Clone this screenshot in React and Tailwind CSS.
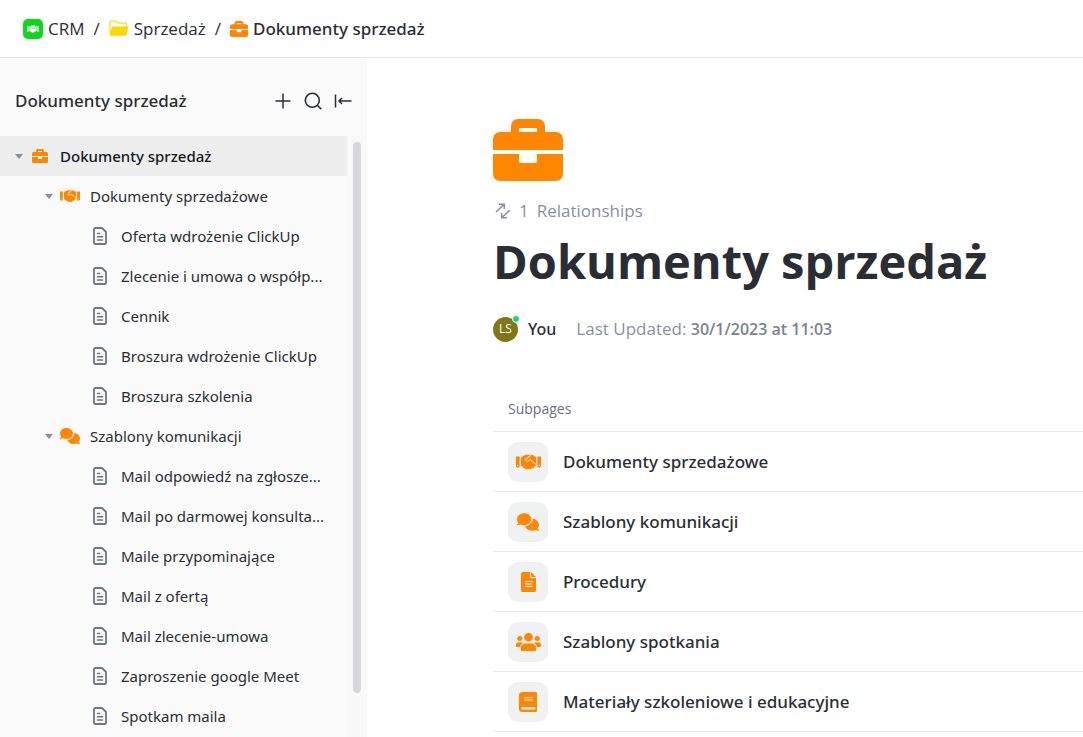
import React, { useState } from 'react';
import { FaComments } from 'react-icons/fa6';

const BriefcaseIcon = ({ className }) => (
  <svg viewBox="0 0 70 62" className={className} fill="currentColor">
    <path
      fillRule="evenodd"
      d="M18 13V7a7 7 0 0 1 7-7h20a7 7 0 0 1 7 7v6h11a7 7 0 0 1 7 7v11H0V20a7 7 0 0 1 7-7ZM26 9v4h18V9Z"
    />
    <path d="M0 35h26v7a2 2 0 0 0 2 2h14a2 2 0 0 0 2-2v-7h26v20a7 7 0 0 1-7 7H7a7 7 0 0 1-7-7Z" />
  </svg>
);

const HandshakeIcon = ({ className, line = '#fff' }) => (
  <svg viewBox="0 0 25 16" className={className} fill="currentColor">
    <path d="M0 2.500h3.600v11H1.200A1.200 1.200 0 0 1 0 12.300ZM25 2.500h-3.600v11h2.400a1.200 1.200 0 0 0 1.200-1.200Z" />
    <path d="M5 2.800 6.500 2.500 9.500.7H16l3 1.800 1.200.3V11.600l-1.500.6-1 1.600-1.700.1-1.300 1.600-1.900-.4-1.600.5-2.600-1.200-3-2.400H5Z" />
    <path d="M14.500 1.600 10 4.900c-1.300 1.200.5 3 2.200 2l2-1.400 5.300 4.600" fill="none" stroke={line} strokeWidth="1" />
    <path d="M1.200 11h1v1h-1ZM22.800 11h1v1h-1Z" fill={line} />
  </svg>
);

const FileIcon = ({ className }) => (
  <svg viewBox="0 0 15 20" className={className} fill="currentColor">
    <path d="M1.500 0H9v4.800A1.200 1.200 0 0 0 10.200 6H15v12.500a1.500 1.500 0 0 1-1.500 1.500h-12A1.500 1.500 0 0 1 0 18.500v-17A1.500 1.500 0 0 1 1.500 0ZM10 0l5 5h-5Z" />
    <path d="M4 9.500h7.500M4 12h7.500M4 14.500h7.500" stroke="#f0f1f3" strokeWidth="1" />
  </svg>
);

const PeopleIcon = ({ className }) => (
  <svg viewBox="0 0 25 18" className={className} fill="currentColor">
    <circle cx="12.500" cy="4.300" r="4.300" />
    <circle cx="3.800" cy="5.400" r="2.500" />
    <circle cx="21.200" cy="5.400" r="2.500" />
    <path d="M9.500 10.500h6a4.800 4.800 0 0 1 4.800 4.800V16.500a1.500 1.500 0 0 1-1.500 1.500H6.200a1.500 1.500 0 0 1-1.500-1.500V15.300a4.800 4.800 0 0 1 4.800-4.800Z" />
    <path d="M2.800 9.200h2.400L6.800 10.300C5.200 11.200 4.500 12.500 4.200 14H1A1 1 0 0 1 0 13v-1a2.800 2.800 0 0 1 2.800-2.800ZM22.200 9.200h-2.400L18.200 10.300c1.600.9 2.300 2.200 2.600 3.700H24a1 1 0 0 0 1-1v-1a2.800 2.800 0 0 0-2.800-2.800Z" />
  </svg>
);

const BookIcon = ({ className }) => (
  <svg viewBox="0 0 18 20" className={className} fill="currentColor">
    <path d="M3.500 0H17a1 1 0 0 1 1 1V19a1 1 0 0 1-1 1H3.500A3.500 3.500 0 0 1 0 16.500v-13A3.500 3.500 0 0 1 3.500 0Z" />
    <path d="M5 5.500h9M5 8h9" stroke="#f0f1f3" strokeWidth="1" />
    <path d="M3.600 16.300H15" stroke="#f0f1f3" strokeWidth="2.400" strokeLinecap="round" />
  </svg>
);

const DocIcon = () => (
  <svg viewBox="0 0 14 18" className="h-[18px] w-3.5 shrink-0" fill="none" stroke="#6f7680" strokeWidth="1.800" strokeLinecap="round">
    <path d="M2.600 1H9l4 4v10.400A1.600 1.600 0 0 1 11.400 17H2.600A1.600 1.600 0 0 1 1 15.400V2.600A1.600 1.600 0 0 1 2.600 1Z" strokeLinejoin="round" />
    <path d="M4.500 6.500h2M4.500 9.700h5M4.500 13h5" strokeWidth="1.600" />
  </svg>
);

const FolderIcon = () => (
  <svg viewBox="0 0 20 17" className="h-[17px] w-5">
    <path d="M1 13V2.500A1.500 1.500 0 0 1 2.500 1H6.500L8.500 3H16A1.500 1.500 0 0 1 17.500 4.500V7" fill="none" stroke="#fbe04f" strokeWidth="1.600" />
    <path d="M3.500 6.500H19.200L17.800 14.300A1.800 1.800 0 0 1 16 15.800H2A1.500 1.500 0 0 1 .5 14.300Z" fill="#fbd900" />
  </svg>
);

const RelationIcon = () => (
  <svg viewBox="0 0 16 16" className="h-4 w-4" fill="none" stroke="currentColor" strokeWidth="1.600">
    <path d="M1 9 9 1.500M4 1.300h5.300V6M15 7 7 14.500M12 14.700H6.700V10" />
  </svg>
);

const CaretIcon = () => (
  <svg viewBox="0 0 8 5" className="h-[5px] w-2" fill="currentColor">
    <path d="M0 0h8L4 5Z" />
  </svg>
);

const pages = [
  {
    title: 'Dokumenty sprzedażowe',
    icon: HandshakeIcon,
    children: [
      'Oferta wdrożenie ClickUp',
      'Zlecenie i umowa o współp...',
      'Cennik',
      'Broszura wdrożenie ClickUp',
      'Broszura szkolenia',
    ],
  },
  {
    title: 'Szablony komunikacji',
    icon: FaComments,
    children: [
      'Mail odpowiedź na zgłosze...',
      'Mail po darmowej konsulta...',
      'Maile przypominające',
      'Mail z ofertą',
      'Mail zlecenie-umowa',
      'Zaproszenie google Meet',
      'Spotkam maila',
    ],
  },
];

const subpages = [
  { title: 'Dokumenty sprzedażowe', icon: HandshakeIcon, size: 'h-4 w-[25px]' },
  { title: 'Szablony komunikacji', icon: FaComments, size: 'h-[22px] w-[22px]' },
  { title: 'Procedury', icon: FileIcon, size: 'h-5 w-[15px]' },
  { title: 'Szablony spotkania', icon: PeopleIcon, size: 'h-[18px] w-[25px]' },
  { title: 'Materiały szkoleniowe i edukacyjne', icon: BookIcon, size: 'h-5 w-[18px]' },
];

// Leaf row of the page tree
const PageRow = ({ title }) => (
  <li>
    <a href="#" className="flex h-10 items-center gap-3.5 whitespace-nowrap pl-[93px]">
      <DocIcon />
      {title}
    </a>
  </li>
);

const PageGroup = ({ page }) => {
  const [open, setOpen] = useState(true);
  const Icon = page.icon;

  return (
    <li>
      <div className="flex h-10 items-center pl-[45px]">
        <button aria-label={`Toggle ${page.title}`} onClick={() => setOpen(!open)} className="flex w-[15px] items-center text-[#87909e]">
          <CaretIcon />
        </button>
        <Icon className="h-5 w-5 shrink-0 text-[#ff8600]" />
        <a href="#" className="ml-2.5">{page.title}</a>
      </div>
      {open && (
        <ul>
          {page.children.map((title) => (
            <PageRow key={title} title={title} />
          ))}
        </ul>
      )}
    </li>
  );
};

const Header = () => (
  <header className="flex h-[58px] shrink-0 items-center border-b border-[#e8e8e8] pl-[23px] text-[17px]">
    <nav aria-label="Breadcrumb" className="flex items-center">
      <a href="#" className="flex items-center gap-[5px]">
        <span className="flex h-5 w-5 items-center justify-center rounded-[5px] bg-[#0bd81c]">
          <HandshakeIcon className="h-3 w-3 text-white" line="#0bd81c" />
        </span>
        CRM
      </a>
      <span className="mx-[9px]">/</span>
      <a href="#" className="flex items-center gap-[5px]">
        <FolderIcon />
        Sprzedaż
      </a>
      <span className="mx-[9px]">/</span>
      <a href="#" className="flex items-center gap-[5px] font-['Noto_Sans',sans-serif] font-medium">
        <BriefcaseIcon className="h-4 w-[18px] text-[#ff8600]" />
        Dokumenty sprzedaż
      </a>
    </nav>
  </header>
);

const Sidebar = () => (
  <aside className="flex w-[367px] shrink-0 flex-col bg-[#fafafa]">
    <div className="flex h-[78px] shrink-0 items-center justify-between px-[15px] pt-2">
      <h2 className="font-['Noto_Sans',sans-serif] text-[17px] font-medium">Dokumenty sprzedaż</h2>
      <div className="flex gap-3">
        <button aria-label="Add page">
          <svg viewBox="0 0 18 18" className="h-[18px] w-[18px]" fill="none" stroke="currentColor" strokeWidth="1.500">
            <path d="M9 1.500v15M1.500 9h15" />
          </svg>
        </button>
        <button aria-label="Search">
          <svg viewBox="0 0 18 18" className="h-[18px] w-[18px]" fill="none" stroke="currentColor" strokeWidth="1.600">
            <circle cx="8.300" cy="8.300" r="7" />
            <path d="m13.300 13.300 4 4" />
          </svg>
        </button>
        <button aria-label="Collapse sidebar">
          <svg viewBox="0 0 18 18" className="h-[18px] w-[18px]" fill="none" stroke="currentColor" strokeWidth="1.500">
            <path d="M1.500 2.500v13M5 9h12.500M8 6 5 9l3 3" />
          </svg>
        </button>
      </div>
    </div>
    <div className="flex min-h-0 flex-1">
      <ul className="min-w-0 flex-1 font-['Noto_Sans',sans-serif] text-[15px]">
        <li className="flex h-10 items-center bg-[#ededed] pl-[15px]">
          <button aria-label="Toggle Dokumenty sprzedaż" className="flex w-[17px] items-center text-[#87909e]">
            <CaretIcon />
          </button>
          <BriefcaseIcon className="h-4 w-4 text-[#ff8600]" />
          <a href="#" className="ml-3 font-medium text-[#16191d]">Dokumenty sprzedaż</a>
        </li>
        {pages.map((page) => (
          <PageGroup key={page.title} page={page} />
        ))}
      </ul>
      <div className="flex w-5 justify-center bg-[#f8f8f8] pb-11 pt-1.5">
        <div className="w-2 rounded-full bg-[#d6d6db]" />
      </div>
    </div>
  </aside>
);

const App = () => {
  return (
    <div className="flex h-screen flex-col overflow-hidden bg-white font-['Open_Sans',sans-serif] text-[#2a2e34]">
      <Header />
      <div className="flex min-h-0 flex-1">
        <Sidebar />
        <main className="min-w-0 flex-1 overflow-hidden pl-[126px] pt-[61px]">
          <BriefcaseIcon className="h-[62px] w-[70px] text-[#ff8600]" />
          <div className="mt-4 flex h-7 items-center gap-2 pl-0.5 text-[17px] text-[#87909e]">
            <RelationIcon />
            <span>1</span>
            <span>Relationships</span>
          </div>
          <h1 className="mt-1.5 text-[47px] font-bold leading-[60px]">Dokumenty sprzedaż</h1>
          <div className="mt-6 flex h-7 items-center text-[17px]">
            <span className="relative flex h-[25px] w-[25px] items-center justify-center rounded-full bg-[#827718] text-xs text-white">
              LS
              <span className="absolute -right-0.5 -top-0.5 h-2 w-2 rounded-full border border-white bg-[#1fcf7c]" />
            </span>
            <span className="ml-2.5 font-['Noto_Sans',sans-serif] text-base font-medium">You</span>
            <span className="ml-5 text-[#87909e]">
              Last Updated: <span className="text-base font-semibold text-[#7c828d]">30/1/2023 at 11:03</span>
            </span>
          </div>
          <section className="mt-[52px]">
            <h2 className="flex h-[37px] items-center border-b border-[#e8e8e8] pb-2 pl-[15px] text-sm text-[#656f7d]">Subpages</h2>
            <ul>
              {subpages.map(({ title, icon: Icon, size }) => (
                <li key={title} className="border-b border-[#e8e8e8]">
                  <a href="#" className="flex h-[59px] items-center gap-[15px] pl-[15px] pt-px font-['Noto_Sans',sans-serif] text-[17px] font-medium">
                    <span className="flex h-10 w-10 items-center justify-center rounded-[10px] bg-[#f0f1f3] text-[#ff8600]">
                      <Icon className={size} />
                    </span>
                    {title}
                  </a>
                </li>
              ))}
            </ul>
          </section>
        </main>
      </div>
    </div>
  );
};

export default App;
